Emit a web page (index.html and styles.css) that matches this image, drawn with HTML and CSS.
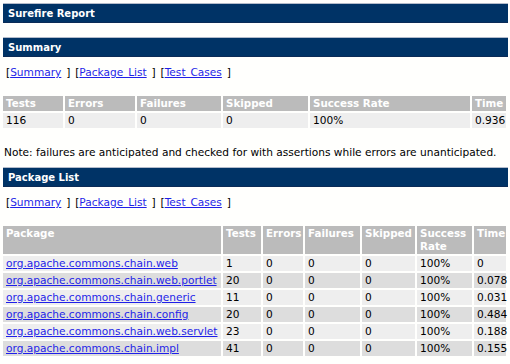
FILE: index.html
```html
<!DOCTYPE html>
<html>
<head>
	<meta charset="utf-8">
	<title>Surefire Report</title>
	<link rel="stylesheet" href="styles.css">
</head>
<body>
	<h2 class="bar">Surefire Report</h2>

	<h2 class="bar mgt">Summary</h2>
	<p class="nav">[<a href="#summary">Summary</a> ] [<a href="#packages">Package List</a> ] [<a href="#cases">Test Cases</a> ]</p>
	<table class="grid sum">
		<tr>
			<th class="c1">Tests</th>
			<th class="c2">Errors</th>
			<th class="c3">Failures</th>
			<th class="c4">Skipped</th>
			<th class="c5">Success Rate</th>
			<th>Time</th>
		</tr>
		<tr class="a">
			<td>116</td>
			<td>0</td>
			<td>0</td>
			<td>0</td>
			<td>100%</td>
			<td>0.936</td>
		</tr>
	</table>
	<p class="note">Note: failures are anticipated and checked for with assertions while errors are unanticipated.</p>

	<h2 class="bar">Package List</h2>
	<p class="nav">[<a href="#summary">Summary</a> ] [<a href="#packages">Package List</a> ] [<a href="#cases">Test Cases</a> ]</p>
	<table class="grid pkg">
		<tr>
			<th class="p1">Package</th>
			<th class="p2">Tests</th>
			<th class="p3">Errors</th>
			<th class="p4">Failures</th>
			<th class="p5">Skipped</th>
			<th class="p6">Success Rate</th>
			<th>Time</th>
		</tr>
		<tr class="a">
			<td><a href="#web">org.apache.commons.chain.web</a></td>
			<td>1</td><td>0</td><td>0</td><td>0</td><td>100%</td><td>0</td>
		</tr>
		<tr class="b">
			<td><a href="#portlet">org.apache.commons.chain.web.portlet</a></td>
			<td>20</td><td>0</td><td>0</td><td>0</td><td>100%</td><td>0.078</td>
		</tr>
		<tr class="a">
			<td><a href="#generic">org.apache.commons.chain.generic</a></td>
			<td>11</td><td>0</td><td>0</td><td>0</td><td>100%</td><td>0.031</td>
		</tr>
		<tr class="b">
			<td><a href="#config">org.apache.commons.chain.config</a></td>
			<td>20</td><td>0</td><td>0</td><td>0</td><td>100%</td><td>0.484</td>
		</tr>
		<tr class="a">
			<td><a href="#servlet">org.apache.commons.chain.web.servlet</a></td>
			<td>23</td><td>0</td><td>0</td><td>0</td><td>100%</td><td>0.188</td>
		</tr>
		<tr class="b">
			<td><a href="#impl">org.apache.commons.chain.impl</a></td>
			<td>41</td><td>0</td><td>0</td><td>0</td><td>100%</td><td>0.155</td>
		</tr>
	</table>
</body>
</html>
```

FILE: styles.css
```css
* {
	margin: 0;
	padding: 0;
	box-sizing: border-box;
}
body {
	font-family: "DejaVu Sans", Verdana, sans-serif;
	font-size: 10.6px;
	line-height: 13px;
	color: #000;
	background: #fffffd;
	padding: 3px 2px 0 3px;
}
a {
	color: #1f1fe8;
}
.bar {
	background: #036;
	color: #fff;
	font-size: 10px;
	font-weight: bold;
	line-height: 13px;
	height: 20px;
	padding: 3px 5px 2px;
	border-top: 1px solid #b4bccb;
	border-bottom: 1px solid #0b2b57;
}
.mgt {
	margin-top: 14px;
}
.nav {
	margin: 9px 0 0 3px;
	word-spacing: 1.5px;
}
.note {
	margin: 16px 0 0 1px;
}
.note + .bar {
	margin-top: 8px;
}
.nav + .grid {
	margin-top: 15px;
}
.grid {
	border-spacing: 2px;
	margin-left: -2px;
	width: 507px;
	table-layout: fixed;
}
.grid th {
	background: #bbb;
	color: #fff;
	font-size: 10.3px;
	font-weight: bold;
	text-align: left;
	vertical-align: top;
	padding: 1px 3px;
}
.grid td {
	padding: 1px 3px;
	white-space: nowrap;
}
.a td {
	background: #eee;
}
.b td {
	background: #ddd;
}
.c1 { width: 60px; }
.c2 { width: 70px; }
.c3 { width: 84px; }
.c4 { width: 85px; }
.c5 { width: 160px; }
.p1 { width: 218px; }
.p2 { width: 38px; }
.p3 { width: 40px; }
.p4 { width: 55px; }
.p5 { width: 53px; }
.p6 { width: 55px; }
```
